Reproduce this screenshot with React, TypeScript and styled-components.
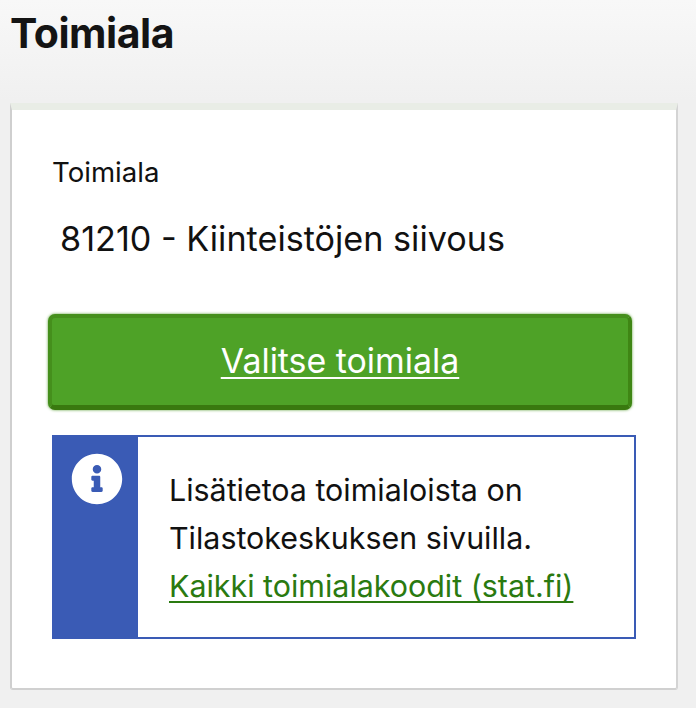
import React from 'react'
import styled, { createGlobalStyle } from 'styled-components'
import { FaInfoCircle } from 'react-icons/fa'

const GlobalStyle = createGlobalStyle`
  html, body {
    margin: 0;
    padding: 0;
  }
  body {
    width: 696px;
    height: 708px;
    overflow: hidden;
    background: #f0f0f0;
    font-family: Inter, "Liberation Sans", sans-serif;
    color: #111;
  }
`

const Page = styled.div`
  height: 708px;
  padding: 0 18px 0 10px;
  box-sizing: border-box;
  background: linear-gradient(#f8f8f8, #f0f0f0 100px);
`

const Title = styled.h1`
  margin: 0;
  height: 103px;
  padding-top: 8px;
  box-sizing: border-box;
  font-size: 41px;
  line-height: 50px;
  font-weight: 700;
  letter-spacing: -0.45px;
  color: #141414;
`

const Card = styled.section`
  height: 587px;
  box-sizing: border-box;
  padding: 45px 42px 0 38px;
  background: #fff;
  border-left: 2px solid #cfcfcf;
  border-right: 2px solid #d4d4d4;
  border-bottom: 2px solid #d0d0d0;
  border-top: 7px solid #e9ede6;
  border-radius: 0 0 3px 3px;
`

const Label = styled.div`
  margin-left: 2px;
  font-size: 27.6px;
  line-height: 34px;
`

const Value = styled.div`
  margin: 28px 0 0 10px;
  font-size: 34.2px;
  line-height: 44px;
`

const Button = styled.a`
  display: block;
  margin: 53px 2px 0 -2px;
  height: 96px;
  box-sizing: border-box;
  border: 4px solid #458f1c;
  border-right-color: #3f8614;
  border-bottom: 5px solid #39790f;
  border-radius: 7px;
  background: #4ea227;
  box-shadow: 0 0 3px #5c9f38;
  color: #fff;
  font-size: 33.9px;
  line-height: 86px;
  text-align: center;
  text-decoration: underline;
  text-decoration-thickness: 2px;
  text-underline-offset: 4px;
`

const Notice = styled.div`
  display: flex;
  margin: 25px 0 0 2px;
  width: 584px;
  height: 204px;
  box-sizing: border-box;
  border: 2px solid #3a5bb5;
  background: #fff;
`

const NoticeSide = styled.div`
  flex: 0 0 84px;
  display: flex;
  justify-content: center;
  padding: 16px 0 0 2px;
  box-sizing: border-box;
  background: #3a5bb5;
  color: #fff;
`

const NoticeBody = styled.div`
  padding: 29px 0 0 31px;
  font-size: 30.4px;
  line-height: 48px;
`

const NoticeLink = styled.a`
  color: #2a7a10;
  text-decoration: underline;
  text-decoration-thickness: 2px;
  text-underline-offset: 4px;
`

const App: React.FC = () => {
  return (
    <Page>
      <GlobalStyle />
      <Title>Toimiala</Title>
      <Card>
        <Label>Toimiala</Label>
        <Value>81210 - Kiinteistöjen siivous</Value>
        <Button>Valitse toimiala</Button>
        <Notice>
          <NoticeSide>
            <FaInfoCircle size={52} />
          </NoticeSide>
          <NoticeBody>
            Lisätietoa toimialoista on
            <br />
            Tilastokeskuksen sivuilla.
            <br />
            <NoticeLink>Kaikki toimialakoodit (stat.fi)</NoticeLink>
          </NoticeBody>
        </Notice>
      </Card>
    </Page>
  )
}

export default App
